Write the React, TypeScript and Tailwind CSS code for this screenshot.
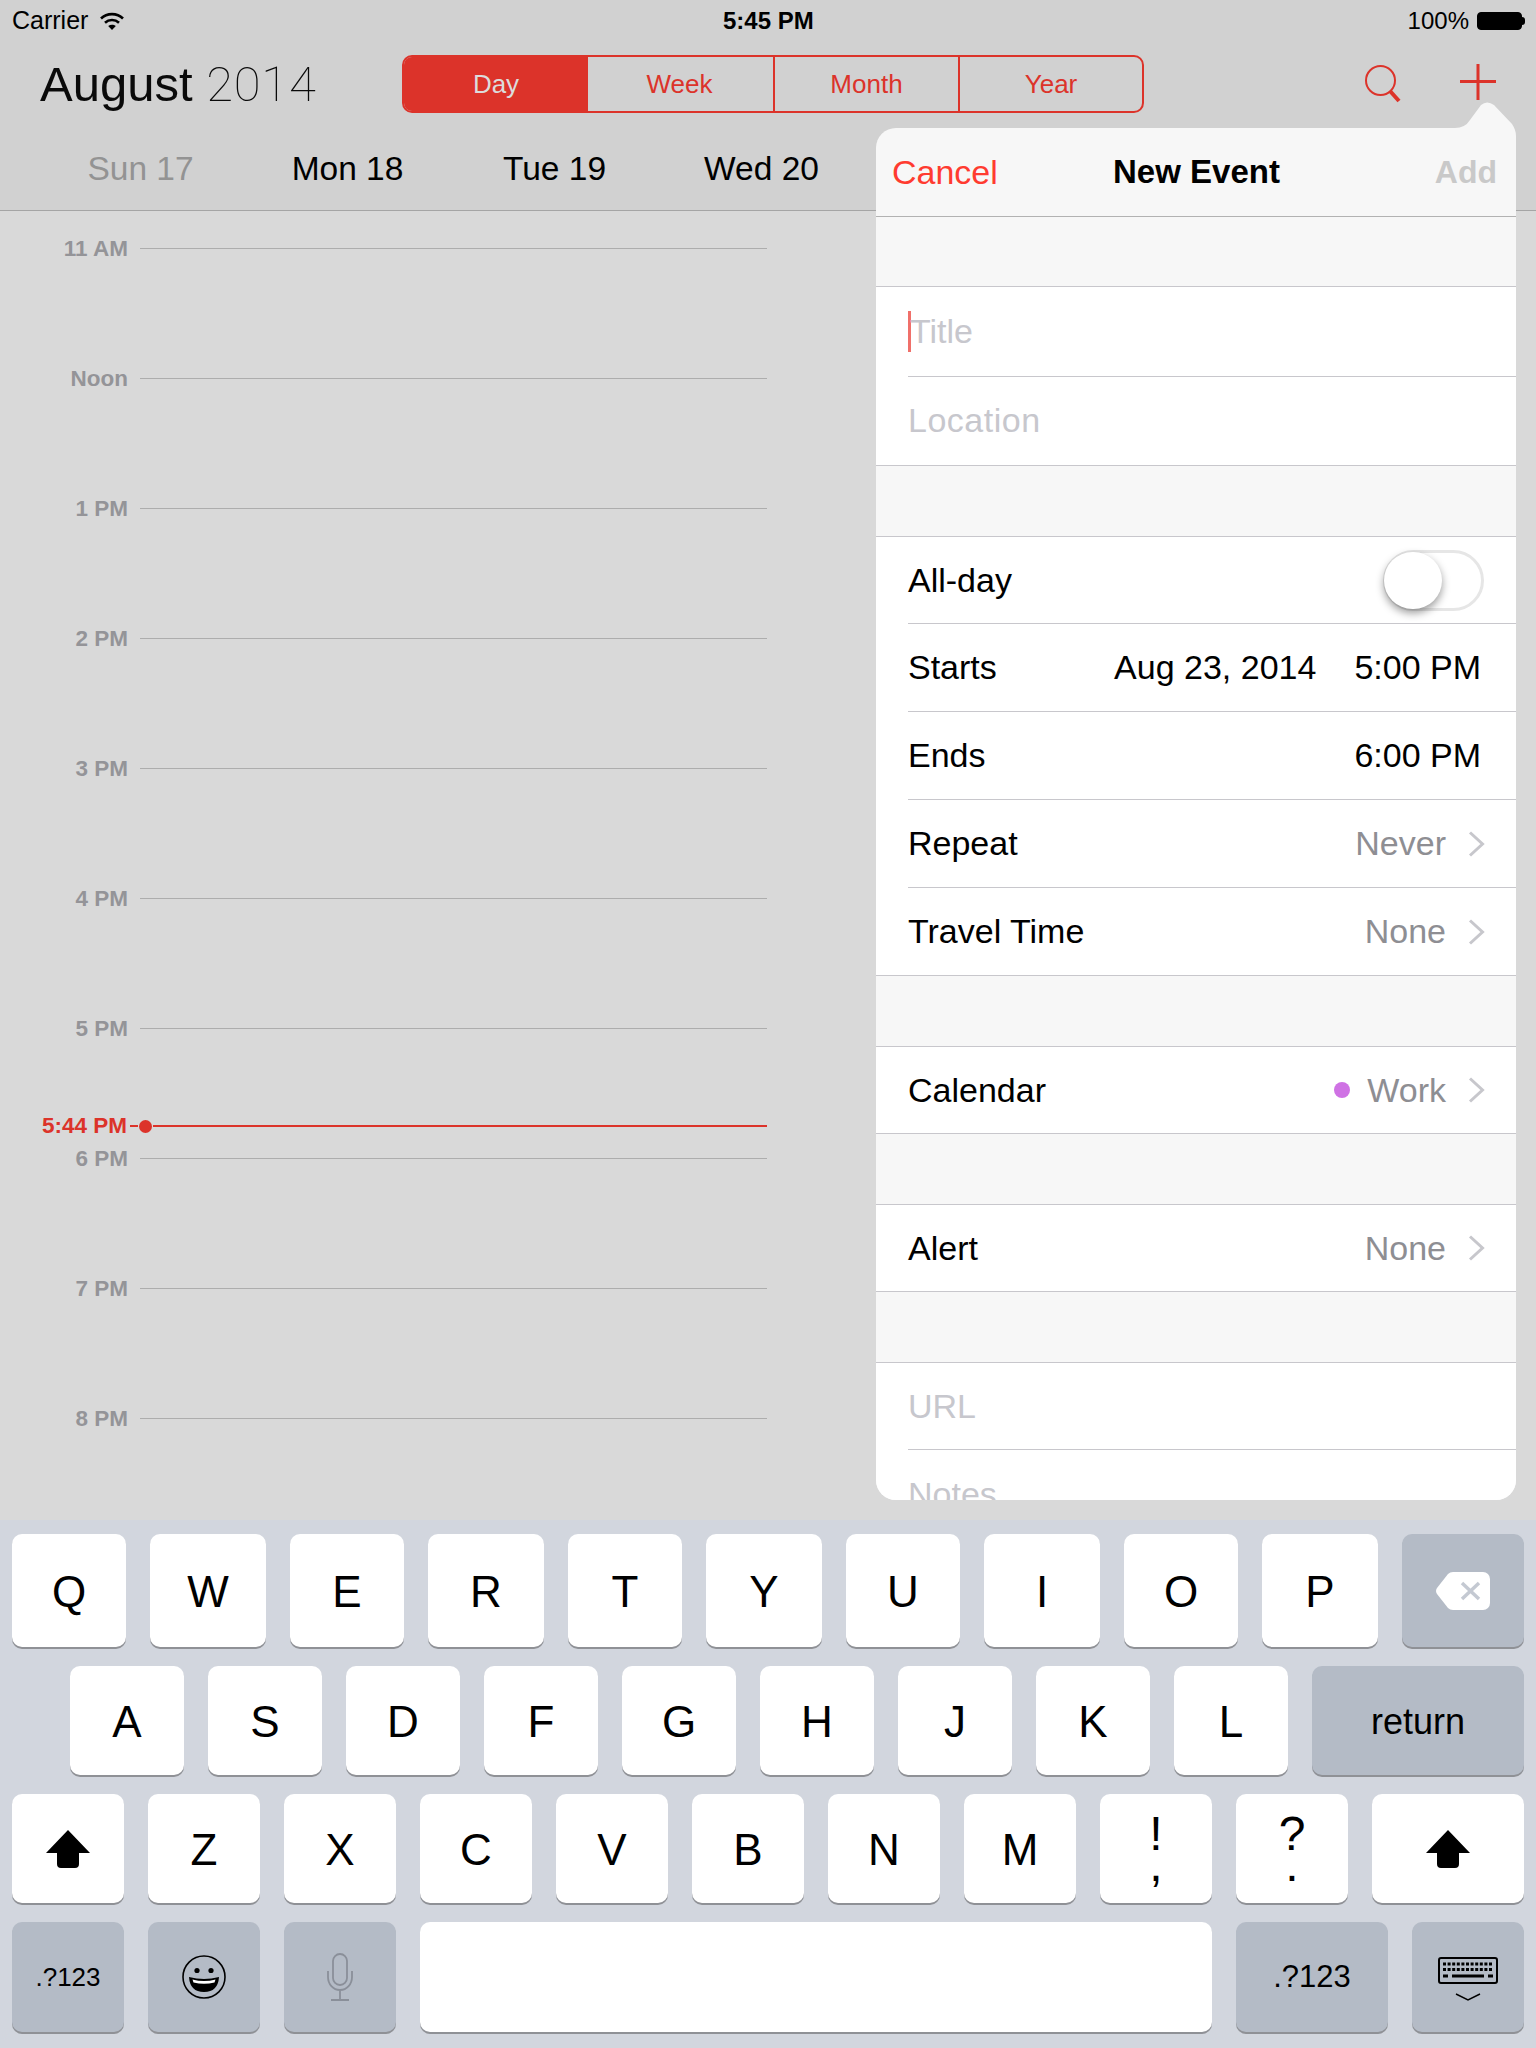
const hours = ['11 AM', 'Noon', '1 PM', '2 PM', '3 PM', '4 PM', '5 PM', '6 PM', '7 PM', '8 PM']
const days = [
  { label: 'Sun 17', dim: true },
  { label: 'Mon 18' },
  { label: 'Tue 19' },
  { label: 'Wed 20' },
]
const segments = [
  { label: 'Day', cls: 'w-[184px] bg-[#dc332a] text-[#dcdcdc]' },
  { label: 'Week', cls: 'w-[185px] pr-[2px] text-[#dc332a]' },
  { label: 'Month', cls: 'w-[185px] border-l-2 border-[#dc332a] text-[#dc332a]' },
  { label: 'Year', cls: 'w-[184px] border-l-2 border-[#dc332a] text-[#dc332a]' },
]
const row1 = [['Q', 114], ['W', 116], ['E', 114], ['R', 116], ['T', 114], ['Y', 116], ['U', 114], ['I', 116], ['O', 114], ['P', 116]] as const
const row2 = ['A', 'S', 'D', 'F', 'G', 'H', 'J', 'K', 'L']
const row3 = ['Z', 'X', 'C', 'V', 'B', 'N', 'M']

function Chevron() {
  return (
    <svg width="17" height="26" viewBox="0 0 17 26" fill="none" className="ml-[22px]">
      <path d="M2 1.5 14.5 13 2 24.5" stroke="#c7c7cc" strokeWidth="3" />
    </svg>
  )
}

function Key({ w, h, gray, children }: { w: number; h: string; gray?: boolean; children?: React.ReactNode }) {
  return (
    <div
      className={`flex items-center justify-center rounded-[10px] text-black shadow-[0_2px_0_#8f9196] ${h} ${gray ? 'bg-[#b4bbc6]' : 'bg-white'}`}
      style={{ width: w }}
    >
      {children}
    </div>
  )
}

function ShiftIcon() {
  return (
    <svg width="44" height="38" viewBox="0 0 44 38">
      <path d="M22 0 44 23H33V34a4 4 0 0 1-4 4H15a4 4 0 0 1-4-4V23H0Z" fill="#000" />
    </svg>
  )
}

function PlainRow({ label, last, children }: { label: string; last?: boolean; children?: React.ReactNode }) {
  return (
    <div className={`flex items-center justify-between pr-[31px] text-[34px] text-black ${last ? 'h-[87px] pl-8' : 'ml-8 h-[88px] border-b border-[#c8c7cc]'}`}>
      <span>{label}</span>
      {children}
    </div>
  )
}

function Gray({ children }: { children: React.ReactNode }) {
  return <span className="flex items-center text-[34px] text-[#8e8e93]">{children}<Chevron /></span>
}

export default function App() {
  return (
    <div className="relative flex h-[2048px] w-[1536px] flex-col overflow-hidden bg-[#d9d9d9] font-['Liberation_Sans',Arial,sans-serif]">
      <div className="bg-[#d1d1d1]">
        {/* status bar */}
        <div className="relative flex h-10 items-center justify-between pl-3 pr-[11px] pt-px text-[24px] text-black">
          <div className="flex items-center gap-[12px]">
            <span className="text-[25px]">Carrier</span>
            <svg width="24" height="18" viewBox="0 0 24 18" fill="none" stroke="#000" strokeWidth="2.6">
              <path d="M1 6.5C7 .7 17 .7 23 6.5" />
              <path d="M5 10.7C9 7 15 7 19 10.7" />
              <path d="M12 18 8.2 14c2.2-1.8 5.4-1.8 7.6 0Z" fill="#000" stroke="none" />
            </svg>
          </div>
          <span className="absolute left-[723px] font-bold">5:45 PM</span>
          <div className="flex items-center gap-[8px]">
            <span>100%</span>
            <div className="flex items-center">
              <div className="h-[18px] w-[45px] rounded-[4px] border border-black bg-black" />
              <div className="h-[8px] w-[3px] rounded-r-full bg-black" />
            </div>
          </div>
        </div>
        {/* nav row */}
        <div className="flex h-[88px] items-center pl-10">
          <div className="w-[362px] pt-[2px] text-[49px] text-[#0a0a0a]">
            August <span className="font-['Roboto',sans-serif] font-thin tracking-[0.75px]">2014</span>
          </div>
          <div className="flex h-[58px] w-[742px] overflow-hidden rounded-[10px] border-2 border-[#dc332a]">
            {segments.map(s => (
              <div key={s.label} className={`flex items-center justify-center text-[26px] ${s.cls}`}>
                {s.label}
              </div>
            ))}
          </div>
          <svg width="38" height="38" viewBox="0 0 38 38" fill="none" stroke="#dc332a" className="ml-[220px]">
            <ellipse cx="16.5" cy="15.5" rx="14.5" ry="14.5" strokeWidth="2" />
            <path d="M26 26 35 36" strokeWidth="4" />
          </svg>
          <svg width="36" height="36" viewBox="0 0 36 36" fill="none" stroke="#dc332a" strokeWidth="3" className="ml-[58px] -mt-1">
            <path d="M0 17.5H36M18 0V36" />
          </svg>
        </div>
        {/* day headers */}
        <div className="flex h-[83px] items-center border-b border-[#a5a5a5] pl-[37px] text-[33.5px] text-black">
          {days.map(d => (
            <div key={d.label} className={`w-[207px] text-center ${d.dim ? 'text-[#939393]' : ''}`}>{d.label}</div>
          ))}
        </div>
      </div>

      {/* day grid */}
      <div className="min-h-0 flex-1 overflow-hidden pt-[37px]">
        {hours.map(h => (
          <div key={h} className="flex h-[130px] items-start">
            <div className="-mt-[12px] w-[128px] text-right text-[22.5px] font-bold leading-[26px] text-[#949498]">{h}</div>
            <div className="ml-[12px] h-px w-[627px] bg-[#adadad]" />
          </div>
        ))}
      </div>

      {/* now marker */}
      <div className="absolute left-0 top-[1113px] flex h-[26px] items-center">
        <div className="w-[127px] text-right text-[22.5px] font-bold leading-[26px] text-[#dc332a]">5:44 PM</div>
        <div className="ml-[3px] h-[2px] w-[8px] bg-[#dc332a]" />
        <div className="ml-[1px] h-[13px] w-[13px] rounded-full bg-[#dc332a]" />
        <div className="ml-[1px] h-[2px] w-[614px] bg-[#dc332a]" />
      </div>

      {/* keyboard */}
      <div className="flex h-[528px] shrink-0 flex-col gap-[19px] bg-[#d2d6de] px-3 pt-[14px] text-[44px]">
        <div className="flex gap-6">
          {row1.map(([k, w]) => <Key key={k} w={w} h="h-[113px]"><span className="pt-[2px]">{k}</span></Key>)}
          <Key w={122} h="h-[113px]" gray>
            <svg width="54" height="38" viewBox="0 0 54 38">
              <path d="M17 0H47a7 7 0 0 1 7 7V31a7 7 0 0 1-7 7H17Q14 38 12 36L1 22Q-1 19 1 16L12 2Q14 0 17 0Z" fill="#fff" />
              <path d="M26 11 43 27M43 11 26 27" stroke="#c4c9d2" strokeWidth="3.5" />
            </svg>
          </Key>
        </div>
        <div className="flex gap-6 pl-[58px]">
          {row2.map(k => <Key key={k} w={114} h="h-[109px]"><span className="pt-[2px]">{k}</span></Key>)}
          <Key w={212} h="h-[109px]" gray><span className="pt-[2px] text-[36px]">return</span></Key>
        </div>
        <div className="flex gap-6">
          <Key w={112} h="h-[109px]"><ShiftIcon /></Key>
          {row3.map(k => <Key key={k} w={112} h="h-[109px]"><span className="pt-[2px]">{k}</span></Key>)}
          <Key w={112} h="h-[109px]"><span className="text-center text-[48px] leading-[31px]">!<br />,</span></Key>
          <Key w={112} h="h-[109px]"><span className="text-center text-[48px] leading-[31px]">?<br />.</span></Key>
          <Key w={152} h="h-[109px]"><ShiftIcon /></Key>
        </div>
        <div className="flex gap-6">
          <Key w={112} h="h-[110px]" gray><span className="text-[26px]">.?123</span></Key>
          <Key w={112} h="h-[110px]" gray>
            <svg width="44" height="44" viewBox="0 0 44 44">
              <circle cx="22" cy="22" r="21" fill="none" stroke="#000" strokeWidth="1.6" />
              <circle cx="15" cy="15.5" r="2.6" />
              <circle cx="29" cy="15.5" r="2.6" />
              <path d="M7 22Q22 26 37 22Q36 37 22 37Q8 37 7 22Z" />
              <path d="M10.5 24.5Q22 27.5 33.5 24.5L32.5 27.5Q22 30 11.5 27.5Z" fill="#fff" />
            </svg>
          </Key>
          <Key w={112} h="h-[110px]" gray>
            <svg width="26" height="48" viewBox="0 0 26 48" fill="none" stroke="#8a8f99" strokeWidth="1.8">
              <rect x="6" y="1" width="14" height="31" rx="7" />
              <path d="M1 18V24C1 31 6 37 13 37S25 31 25 24V18M13 37V47M4 47H22" />
            </svg>
          </Key>
          <Key w={792} h="h-[110px]" />
          <Key w={152} h="h-[110px]" gray><span className="text-[31px]">.?123</span></Key>
          <Key w={112} h="h-[110px]" gray>
            <svg width="60" height="44" viewBox="0 0 60 44" className="mt-[3px]">
              <rect x="1" y="1" width="58" height="25" rx="2" fill="none" stroke="#000" strokeWidth="2" />
              <path d="M5 7H55M5 12.5H55" stroke="#000" strokeWidth="3" strokeDasharray="3 1.6" />
              <path d="M5 19H10M14 19H46M50 19H55" stroke="#000" strokeWidth="3" />
              <path d="M18 37 30 43 42 37" fill="none" stroke="#000" strokeWidth="1.4" />
            </svg>
          </Key>
        </div>
      </div>

      {/* new event popover */}
      <div className="absolute left-[876px] top-[128px] h-[1372px] w-[640px]">
        <svg width="76" height="46" viewBox="0 0 76 46" className="absolute -top-[26px] right-0 z-10">
          <path d="M0 26H15Q25 26 30 18L41 3Q47-2 54 3L72 22Q76 28 76 34V46H0Z" fill="#f7f7f7" />
        </svg>
        <div className="flex h-full flex-col overflow-hidden rounded-[20px] bg-[#f7f7f7]">
          <div className="relative z-20 flex h-[89px] shrink-0 items-center justify-between border-b border-[#b2b2b2] pl-[16px] pr-[19px]">
            <span className="text-[34px] text-[#ff3b30]">Cancel</span>
            <span className="absolute left-[237px] text-[33px] font-bold text-black">New Event</span>
            <span className="text-[32px] font-bold text-[#c9c9c9]">Add</span>
          </div>
          <div className="h-[69px] shrink-0" />

          <div className="shrink-0 border-y border-[#c8c7cc] bg-white text-[34px] text-[#c7c7cd]">
            <div className="ml-8 flex h-[90px] items-center border-b border-[#c8c7cc]">
              <span className="mr-[-1px] h-[41px] w-[3px] bg-[#f0706a]" />
              <span>Title</span>
            </div>
            <div className="ml-8 flex h-[88px] items-center pb-[2px] tracking-[0.5px]">Location</div>
          </div>
          <div className="h-[70px] shrink-0" />

          <div className="shrink-0 border-y border-[#c8c7cc] bg-white">
            <div className="ml-8 flex h-[87px] items-center justify-between border-b border-[#c8c7cc] pr-[32px] text-[34px] text-black">
              <span>All-day</span>
              <div className="flex h-[61px] w-[101px] items-center rounded-full border-[3px] border-[#e6e6e6]">
                <div className="-ml-[2px] h-[57px] w-[58px] rounded-full bg-white shadow-[0_4px_8px_rgba(0,0,0,0.4)]" />
              </div>
            </div>
            <PlainRow label="Starts">
              <span className="pr-[4px]"><span className="mr-[38px]">Aug 23, 2014</span>5:00 PM</span>
            </PlainRow>
            <PlainRow label="Ends">
              <span className="pr-[4px]">6:00 PM</span>
            </PlainRow>
            <PlainRow label="Repeat"><Gray>Never</Gray></PlainRow>
            <PlainRow label="Travel Time" last><Gray>None</Gray></PlainRow>
          </div>
          <div className="h-[70px] shrink-0" />

          <div className="shrink-0 border-y border-[#c8c7cc] bg-white">
            <div className="flex h-[86px] items-center justify-between pl-8 pr-[31px] text-[34px] text-black">
              <span>Calendar</span>
              <Gray><span className="mr-[17px] h-4 w-4 rounded-full bg-[#cf72e4]" />Work</Gray>
            </div>
          </div>
          <div className="h-[70px] shrink-0" />

          <div className="shrink-0 border-y border-[#c8c7cc] bg-white">
            <div className="flex h-[86px] items-center justify-between pl-8 pr-[31px] text-[34px] text-black">
              <span>Alert</span>
              <Gray>None</Gray>
            </div>
          </div>
          <div className="h-[70px] shrink-0" />

          <div className="min-h-0 flex-1 border-t border-[#c8c7cc] bg-white text-[34px] text-[#c7c7cd]">
            <div className="ml-8 flex h-[87px] items-center border-b border-[#c8c7cc]">URL</div>
            <div className="ml-8 pt-[24px] leading-[40px]">Notes</div>
          </div>
        </div>
      </div>
    </div>
  )
}
